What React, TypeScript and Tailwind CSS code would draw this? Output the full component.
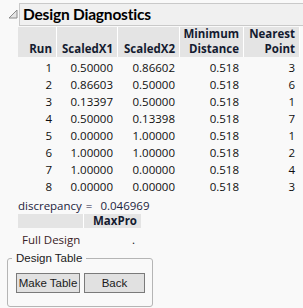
const cols = [
  { w: "w-[39px]", label: ["", "Run"] },
  { w: "w-[61px]", label: ["", "ScaledX1"] },
  { w: "w-[62px]", label: ["", "ScaledX2"] },
  { w: "w-[64px]", label: ["Minimum", "Distance"] },
  { w: "w-[56px]", label: ["Nearest", "Point"] },
];

const rows = [
  ["1", "0.50000", "0.86602", "0.518", "3"],
  ["2", "0.86603", "0.50000", "0.518", "6"],
  ["3", "0.13397", "0.50000", "0.518", "1"],
  ["4", "0.50000", "0.13398", "0.518", "7"],
  ["5", "0.00000", "1.00000", "0.518", "1"],
  ["6", "1.00000", "1.00000", "0.518", "2"],
  ["7", "1.00000", "0.00000", "0.518", "4"],
  ["8", "0.00000", "0.00000", "0.518", "3"],
];

export default function App() {
  return (
    <div className="w-[303px] h-[308px] overflow-hidden bg-[#f9f9f9] font-['Open_Sans','Noto_Sans',sans-serif] text-[11.5px] text-[#0f0f0f]">
      {/* outline title */}
      <div className="flex items-start pt-[3px]">
        <svg width="10" height="10" viewBox="0 0 10 10" className="ml-[8px] mt-[6px] shrink-0">
          <path d="M9 1 L9 9 L1 9 Z" fill="#e4e4e4" stroke="#8a8a8a" strokeWidth="1" />
        </svg>
        <div className="ml-[1px] flex-1 h-[23px] border-y border-l border-[#c9c9c9] bg-[#f0f0f0] pl-[3px] font-['Lato',sans-serif] text-[15.5px] font-bold leading-[21px] tracking-[-0.2px] text-black">
          Design Diagnostics
        </div>
      </div>

      {/* diagnostics table */}
      <div className="ml-[18px] mt-[1px]">
        <div className="flex h-[30px]">
          {cols.map((c, i) => (
            <div
              key={i}
              className={`${c.w} flex flex-col justify-end bg-[#e4e4e4] border-r border-white pr-[4px] pb-[1px] text-right font-bold leading-[15px] text-[#141b30]`}
            >
              {c.label[0] && <div>{c.label[0]}</div>}
              <div>{c.label[1]}</div>
            </div>
          ))}
        </div>
        <div className="mt-[2px]">
          {rows.map((r, ri) => (
            <div key={ri} className="flex h-[17px] leading-[17px]">
              {r.map((v, ci) => (
                <div key={ci} className={`${cols[ci].w} pr-[5px] text-right`}>
                  {v}
                </div>
              ))}
            </div>
          ))}
        </div>
        <div className="mt-[3px] flex h-[16px] leading-[16px] text-[#1c2440]">
          <span>discrepancy</span>
          <span className="ml-[4px]">=</span>
          <span className="ml-[8px]">0.046969</span>
        </div>

        {/* maxpro */}
        <div className="flex h-[14px] leading-[14px]">
          <div className="w-[66px] bg-[#e4e4e4] border-r border-white" />
          <div className="w-[57px] bg-[#e4e4e4] pr-[4px] text-right font-bold text-[#141b30]">MaxPro</div>
        </div>
        <div className="mt-[3px] flex h-[17px] leading-[17px]">
          <div className="w-[66px] pl-[4px] text-[#3a2226]">Full Design</div>
          <div className="w-[57px] pr-[6px] text-right">.</div>
        </div>
      </div>

      {/* design table group */}
      <fieldset className="ml-[7px] mt-[3px] w-[146px] rounded-[3px] border border-[#b5b5b5] px-[4px] pb-[13px] pt-[8px] font-['Liberation_Sans',Arial,sans-serif] text-[11.5px] text-[#1a1a1a]">
        <legend className="px-[4px] leading-[14px]">Design Table</legend>
        <div className="flex gap-[4px] pl-[4px]">
          <button className="h-[20px] w-[64px] border border-[#7a7a7a] bg-[#e1e1e1] leading-[18px]">Make Table</button>
          <button className="h-[20px] w-[61px] border border-[#7a7a7a] bg-[#e1e1e1] leading-[18px]">Back</button>
        </div>
      </fieldset>
    </div>
  );
}
